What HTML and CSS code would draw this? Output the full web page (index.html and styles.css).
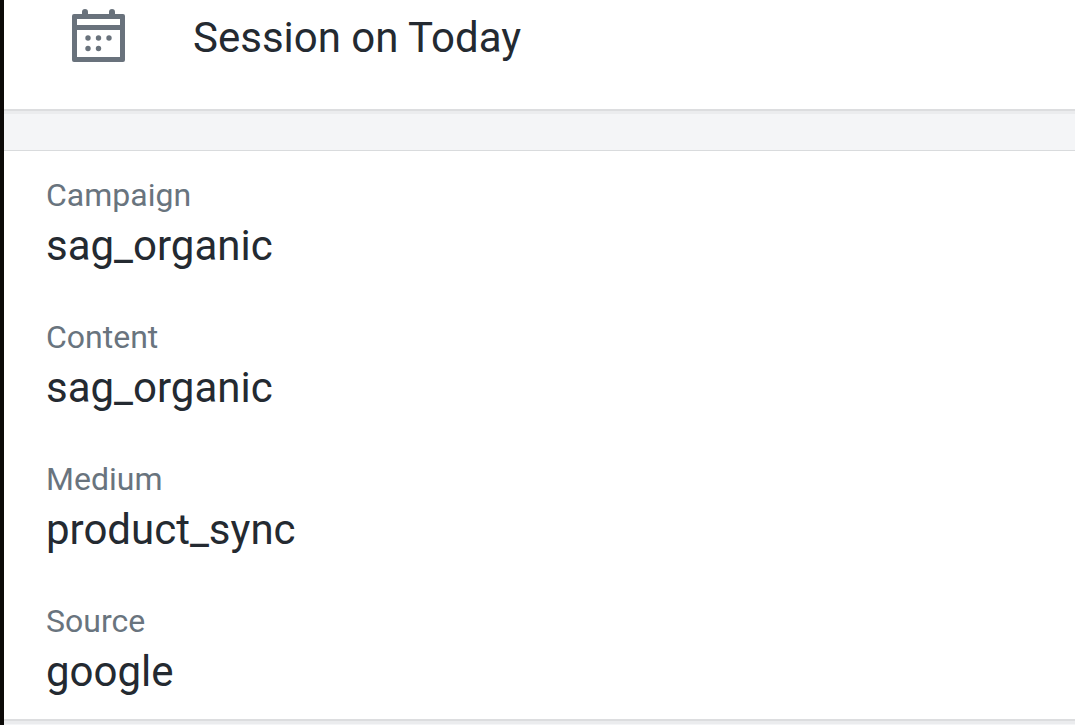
FILE: index.html
```
<!DOCTYPE html>
<html lang="en">
<head>
    <meta charset="UTF-8">
    <meta name="viewport" content="width=device-width, initial-scale=1.0">
    <title>Session on Today</title>
    <link rel="stylesheet" href="styles.css">
</head>
<body>

<header class="session-header">
    <svg class="calendar-icon" viewBox="0 0 53 53" aria-hidden="true">
        <path fill-rule="evenodd" d="M2 5H10V3A3 3 0 0 1 16 3V5H37V3A3 3 0 0 1 43 3V5H51A2 2 0 0 1 53 7V51A2 2 0 0 1 51 53H2A2 2 0 0 1 0 51V7A2 2 0 0 1 2 5ZM5 10V16H48V10ZM5 21V48H48V21Z"/>
        <circle cx="16" cy="29" r="2.700"/>
        <circle cx="26.500" cy="29" r="2.700"/>
        <circle cx="37" cy="29" r="2.700"/>
        <circle cx="16" cy="39.500" r="2.700"/>
        <circle cx="26.500" cy="39.500" r="2.700"/>
    </svg>
    <h1>Session on Today</h1>
</header>

<main class="details">
    <dl class="fields">
        <div class="field">
            <dt>Campaign</dt>
            <dd>sag_organic</dd>
        </div>
        <div class="field">
            <dt>Content</dt>
            <dd>sag_organic</dd>
        </div>
        <div class="field">
            <dt>Medium</dt>
            <dd>product_sync</dd>
        </div>
        <div class="field">
            <dt>Source</dt>
            <dd>google</dd>
        </div>
    </dl>
</main>

</body>
</html>
```
FILE: styles.css
```
* { box-sizing: border-box; margin: 0; padding: 0; }
body {
    min-height: 100vh;
    border-left: 4px solid #0c0a08;
    background: #f4f5f7;
    color: #242a31;
    font-family: Roboto, "Liberation Sans", sans-serif;
}

/* Card edges */
.session-header,
.details {
    background: #fff;
    border-bottom: 2px solid #dcdddf;
    box-shadow: 0 3px 0 #ebecee;
}

/* Header */
.session-header {
    display: flex;
    align-items: flex-start;
    gap: 68px;
    padding: 9px 68px 42px;
}
.session-header h1 {
    font-size: 42px;
    font-weight: 400;
    line-height: 58px;
}
.calendar-icon {
    flex: none;
    width: 53px;
    height: 53px;
    fill: #69727c;
}

/* Session details */
.details {
    margin-top: 39px;
    border-top: 1px solid #d9dbdd;
}
.fields {
    display: flex;
    flex-direction: column;
    gap: 40px;
    padding: 22px 42px 18px;
}
.field dt {
    color: #69747e;
    font-size: 32px;
    line-height: 44px;
}
.field dd {
    font-size: 42px;
    line-height: 58px;
}
```
